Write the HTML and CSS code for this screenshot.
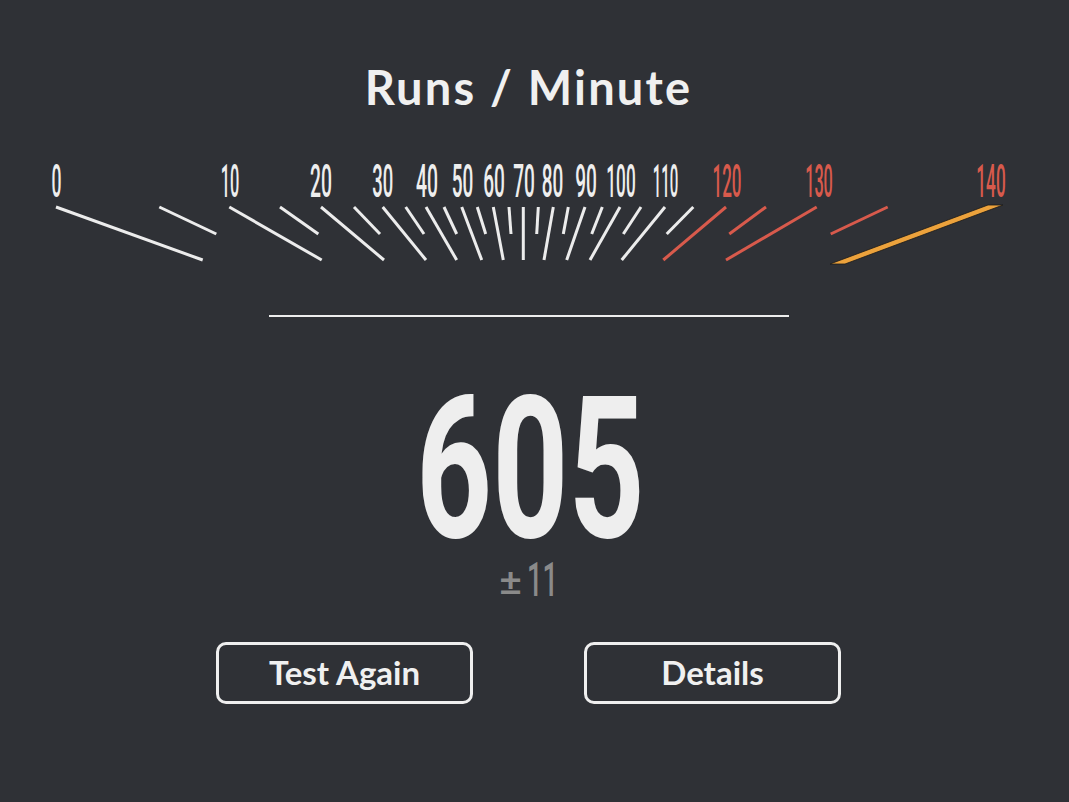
FILE: index.html
```html
<!DOCTYPE html>
<html lang="en">
<head>
<meta charset="utf-8">
<title>Speedometer</title>
<link rel="stylesheet" href="styles.css">
</head>
<body>
<main class="results">
  <h1 class="title">Runs / Minute</h1>
  <svg class="gauge" viewBox="0 150 1057 125" width="1057" height="125" aria-label="gauge">
    <g class="labels">
      <text x="56.5" y="197" textLength="10" lengthAdjust="spacingAndGlyphs">0</text>
      <text x="230" y="197" textLength="18.6" lengthAdjust="spacingAndGlyphs">10</text>
      <text x="321" y="197" textLength="22" lengthAdjust="spacingAndGlyphs">20</text>
      <text x="382.8" y="197" textLength="21" lengthAdjust="spacingAndGlyphs">30</text>
      <text x="427" y="197" textLength="22" lengthAdjust="spacingAndGlyphs">40</text>
      <text x="462.5" y="197" textLength="21.6" lengthAdjust="spacingAndGlyphs">50</text>
      <text x="494" y="197" textLength="21.7" lengthAdjust="spacingAndGlyphs">60</text>
      <text x="524" y="197" textLength="21.7" lengthAdjust="spacingAndGlyphs">70</text>
      <text x="552.5" y="197" textLength="21.6" lengthAdjust="spacingAndGlyphs">80</text>
      <text x="586" y="197" textLength="21.7" lengthAdjust="spacingAndGlyphs">90</text>
      <text x="621" y="197" textLength="29.3" lengthAdjust="spacingAndGlyphs">100</text>
      <text x="665.5" y="197" textLength="25.6" lengthAdjust="spacingAndGlyphs">110</text>
      <text class="hot" x="727" y="197" textLength="29" lengthAdjust="spacingAndGlyphs">120</text>
      <text class="hot" x="819" y="197" textLength="27.7" lengthAdjust="spacingAndGlyphs">130</text>
      <text class="hot" x="991" y="197" textLength="29.3" lengthAdjust="spacingAndGlyphs">140</text>
    </g>
    <g class="ticks">
      <line x1="56" y1="207" x2="202.7" y2="260"/>
      <line x1="159.3" y1="207" x2="216.3" y2="234"/>
      <line x1="229.3" y1="207" x2="321.7" y2="260"/>
      <line x1="280" y1="207" x2="318.3" y2="234"/>
      <line x1="321" y1="207" x2="384" y2="260"/>
      <line x1="354" y1="207" x2="380" y2="234"/>
      <line x1="382.7" y1="207" x2="426" y2="260"/>
      <line x1="405.7" y1="207" x2="424" y2="234"/>
      <line x1="426" y1="207" x2="456.7" y2="260"/>
      <line x1="444" y1="207" x2="456.7" y2="234"/>
      <line x1="461.7" y1="207" x2="481.7" y2="260"/>
      <line x1="477.3" y1="207" x2="485.7" y2="234"/>
      <line x1="493.3" y1="207" x2="503.3" y2="260"/>
      <line x1="509" y1="207" x2="511" y2="234"/>
      <line x1="523.3" y1="207" x2="523.3" y2="260"/>
      <line x1="538.3" y1="207" x2="536.7" y2="234"/>
      <line x1="553.3" y1="207" x2="544" y2="260"/>
      <line x1="568.3" y1="207" x2="563.3" y2="234"/>
      <line x1="585" y1="207" x2="566.7" y2="260"/>
      <line x1="602.3" y1="207" x2="591.7" y2="234"/>
      <line x1="620" y1="207" x2="590" y2="260"/>
      <line x1="641" y1="207" x2="623.3" y2="234"/>
      <line x1="665" y1="207" x2="621.7" y2="260"/>
      <line x1="693.3" y1="207" x2="666.7" y2="234"/>
    </g>
    <g class="ticks hot">
      <line x1="726" y1="207" x2="663.3" y2="260"/>
      <line x1="766" y1="207" x2="729.3" y2="234"/>
      <line x1="816.7" y1="207" x2="726" y2="260"/>
      <line x1="887.7" y1="207" x2="830.7" y2="234"/>
    </g>
    <polygon class="needle" points="830,264 845,264 1003,205 988,205"/>
  </svg>
  <div class="divider"></div>
  <div class="score">
    <span class="value">605</span>
  </div>
  <div class="error">
    <span class="pm">±</span><span class="delta">11</span>
  </div>
  <div class="actions">
    <button class="btn" type="button">Test Again</button>
    <button class="btn" type="button">Details</button>
  </div>
</main>
</body>
</html>
```

FILE: styles.css
```css
html, body {
  margin: 0;
  padding: 0;
  background: #2f3136;
}

body {
  width: 1069px;
  height: 802px;
  overflow: hidden;
  color: #eeeeee;
  font-family: "Lato", "Noto Sans", sans-serif;
}

.results {
  width: 1057px;
  display: flex;
  flex-direction: column;
  align-items: center;
}

.title {
  margin: 0;
  padding-top: 59px;
  height: 91px;
  font-size: 47px;
  line-height: 56px;
  font-weight: 700;
  color: #f0f0f0;
  letter-spacing: 2.2px;
}

.gauge {
  display: block;
  width: 1057px;
  height: 125px;
}

.labels text {
  font-family: "Roboto", sans-serif;
  font-weight: 500;
  font-size: 46px;
  fill: #eeeeee;
  text-anchor: middle;
}

.labels text.hot {
  fill: #d85a4c;
}

.ticks line {
  stroke: #ececec;
  stroke-width: 3;
}

.ticks.hot line {
  stroke: #d85a4c;
}

.needle {
  fill: #eca23c;
  stroke: #1b1b1b;
  stroke-width: 0.8;
}

.divider {
  margin-top: 40px;
  width: 520px;
  height: 2px;
  background: #ededed;
}

.score {
  margin-top: 62px;
  width: 218px;
  height: 180px;
  line-height: 180px;
  font-family: "Roboto", sans-serif;
  font-weight: 700;
  font-size: 198px;
  color: #eeeeee;
  white-space: nowrap;
}

.value {
  display: inline-block;
  transform-origin: left center;
  transform: translateX(-4px) scaleX(0.671);
}

.error {
  margin-top: 1px;
  height: 40px;
  line-height: 40px;
  color: #8a8a8a;
  display: flex;
  align-items: baseline;
  gap: 5px;
  white-space: nowrap;
}

.pm {
  font-family: "Lato", sans-serif;
  font-weight: 700;
  font-size: 39px;
}

.delta {
  display: inline-block;
  width: 31px;
  font-family: "Roboto", sans-serif;
  font-size: 49px;
  font-weight: 500;
  transform-origin: left center;
  transform: scaleX(0.56);
}

.actions {
  margin-top: 42px;
  display: flex;
  gap: 111px;
}

.btn {
  box-sizing: border-box;
  width: 257px;
  height: 62px;
  border: 3px solid #efefef;
  border-radius: 10px;
  background: transparent;
  color: #f0f0f0;
  font-family: "Lato", sans-serif;
  font-weight: 700;
  font-size: 33px;
  padding: 0 0 3px;
}
```
